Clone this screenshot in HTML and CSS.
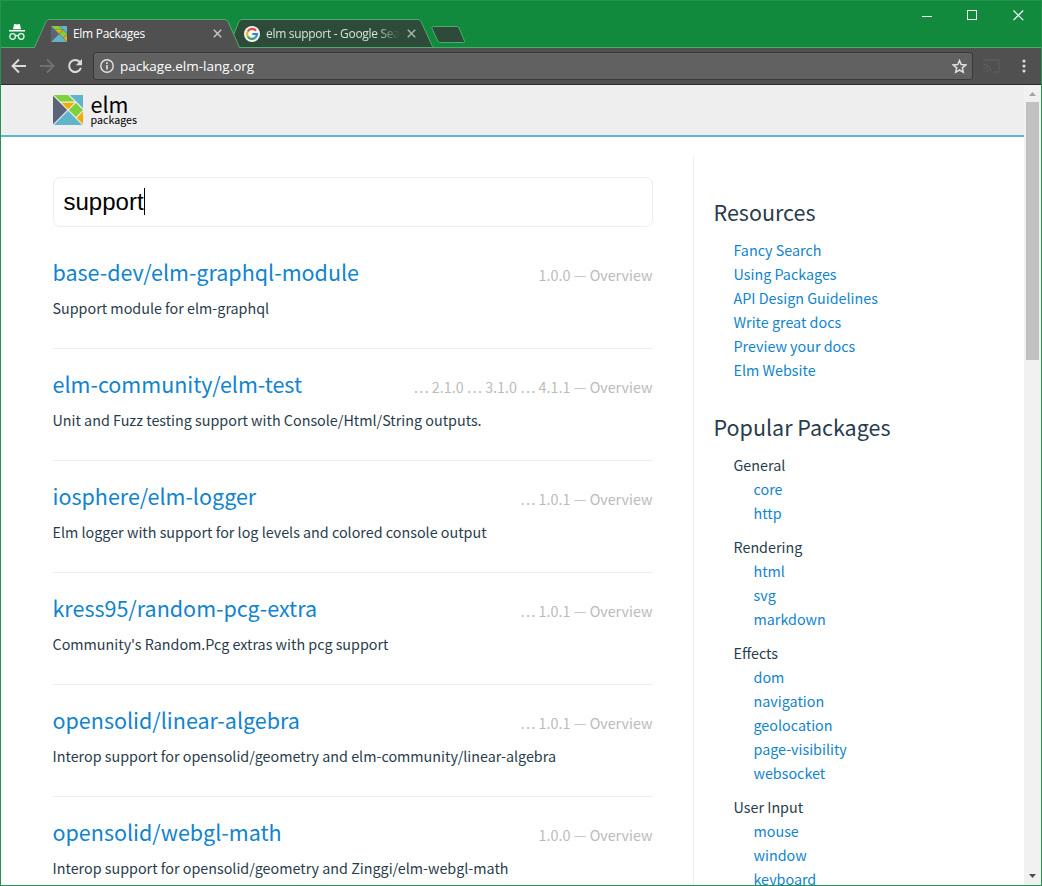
FILE: index.html
```
<!DOCTYPE html>
<html lang="en">
<head>
<meta charset="utf-8">
<title>Elm Packages</title>
<link rel="stylesheet" href="styles.css">
</head>
<body>
<svg width="0" height="0" class="defs">
  <symbol id="elm" viewBox="0 0 30 30">
    <rect class="elm-gap" width="30" height="30"/>
    <path d="M0 .8 14.200 15 0 29.200z" fill="#5a6378"/>
    <path d="M.8 30 15 15.800 29.200 30z" fill="#60b5cc"/>
    <path d="M16.700 0H30v13.300z" fill="#60b5cc"/>
    <path d="M.8 0H15l6.600 6.500H7.400z" fill="#7fd13b"/>
    <path d="M8.500 7.700H21.500L15 14.200z" fill="#f0ad00"/>
    <path d="M22.900 7.900 30 15 22.900 22.100 15.800 15z" fill="#7fd13b"/>
    <path d="M30 16.600V29.200L23.700 22.900z" fill="#f0ad00"/>
  </symbol>
</svg>
<div class="window">
  <div class="tabstrip">
    <svg class="tab-shapes" width="480" height="29" viewBox="0 19 480 29">
      <path d="M232.500 37.500 239 21.500q1-2 3-2H418q2 0 3 2L432 45.500l1.500 2H237z" fill="#2e4b39" stroke="#4faa6f"/>
      <path d="M434.500 26.500H457q1.300 0 2 1.500L464.500 41q.3 1.500-1 1.500H440q-1.500 0-2.200-1.500L432 28.500q-.5-2 1.200-2z" fill="#2e4b39" stroke="#4faa6f"/>
      <path d="M34.500 48 46 21.500q1-2 3-2H225q2 0 3 2L239.500 48z" fill="#505050"/>
      <path d="M0 47.500H34.500L46 21.500q1-2 3-2H225q2 0 3 2L239.500 47.500" fill="none" stroke="#4faa6f"/>
    </svg>
    <svg class="incognito" width="18" height="18" viewBox="0 0 18 18">
      <path d="M5 6.200 6 1.500q.2-.5.800-.4L9 1.600l2.200-.5q.6-.1.800.4L13 6.200z" fill="#fff"/>
      <path d="M1 7h16v1.500H1z" fill="#fff"/>
      <g fill="none" stroke="#e8f5ec" stroke-width="1.300"><circle cx="4.600" cy="13.500" r="2.800"/><circle cx="13.200" cy="13.500" r="2.800"/><path d="M7.400 13q1.500-1 3 0"/></g>
    </svg>
    <div class="tab tab-active">
      <svg class="favicon" width="16" height="16"><use href="#elm"/></svg>
      <span class="tab-title">Elm Packages</span>
      <svg width="9" height="9" class="x"><path d="M.8.8 8.200 8.200M8.200.8.800 8.200" stroke="#c4c4c4" stroke-width="1.500"/></svg>
    </div>
    <div class="tab tab-back">
      <svg width="16" height="16" viewBox="0 0 16 16"><circle cx="8" cy="8" r="8" fill="#f3f6f3"/><g fill="none" stroke-width="2.200"><path d="M12 4.800A5 5 0 0 0 3.700 5.500" stroke="#dc5040"/><path d="M3.700 5.500A5 5 0 0 0 3.700 10.500" stroke="#eab41e"/><path d="M3.700 10.500A5 5 0 0 0 11.300 11.700" stroke="#3fa35a"/><path d="M11.300 11.700A5 5 0 0 0 13 8H8.300" stroke="#3d80d8"/></g></svg>
      <span class="tab-title faded">elm support - Google Sea</span>
      <svg width="9" height="9" class="x"><path d="M.8.8 8.200 8.200M8.200.8.800 8.200" stroke="#a5b5aa" stroke-width="1.500"/></svg>
    </div>
    <div class="controls">
      <svg width="10" height="11"><path d="M0 6.500H10" stroke="#fff"/></svg>
      <svg width="11" height="11"><rect x=".5" y=".5" width="9" height="9" fill="none" stroke="#fff"/></svg>
      <svg width="11" height="11"><path d="M.5.500 10.200 10.200M10.200.500.500 10.200" stroke="#fff" stroke-width="1.200"/></svg>
    </div>
  </div>
  <div class="toolbar">
    <svg class="nav-icon" width="16" height="16" viewBox="0 0 16 16"><path d="M15 8H2M8 1.500 1.500 8 8 14.500" fill="none" stroke="#dcdcdc" stroke-width="1.900"/></svg>
    <svg class="nav-icon" width="16" height="16" viewBox="0 0 16 16"><path d="M1 8H14M8 1.500 14.500 8 8 14.500" fill="none" stroke="#707070" stroke-width="1.900"/></svg>
    <svg class="nav-icon" width="16" height="16" viewBox="0 0 16 16"><path d="M12.700 4A6 6 0 1 0 13.900 9.800" fill="none" stroke="#dcdcdc" stroke-width="2"/><path d="M15 1V7.200H8.800z" fill="#dcdcdc"/></svg>
    <div class="omnibox">
      <svg width="14" height="14" viewBox="0 0 14 14"><circle cx="7" cy="7" r="6.200" fill="none" stroke="#e4e4e4" stroke-width="1.400"/><path d="M7 6V10.500M7 3.300V5" stroke="#e4e4e4" stroke-width="1.600"/></svg>
      <span class="url">package.elm-lang.org</span>
      <svg width="15" height="15" viewBox="0 0 15 15"><path d="M7.500 1.500 9.200 5.600 13.700 6 10.300 8.900 11.300 13.300 7.500 11 3.700 13.300 4.700 8.900 1.300 6 5.800 5.600z" fill="none" stroke="#e0e0e0" stroke-width="1.500"/></svg>
    </div>
    <svg class="cast" width="17" height="14" viewBox="0 0 17 14"><path d="M1 3.500V1H16V13H10M.5 5.500A7.500 7.500 0 0 1 8 13M.5 8.500A4.500 4.500 0 0 1 5 13" fill="none" stroke="#5c5c5c" stroke-width="1.300"/><path d="M.5 11 2.500 13H.5z" fill="#5c5c5c"/></svg>
    <svg class="menu" width="4" height="14"><g fill="#dcdcdc"><circle cx="2" cy="2" r="1.600"/><circle cx="2" cy="7" r="1.600"/><circle cx="2" cy="12" r="1.600"/></g></svg>
  </div>
  <div class="viewport">
    <div class="page">
      <header class="header">
        <div class="brand">
          <svg width="30" height="30"><use href="#elm"/></svg>
          <div class="brand-text"><div class="brand-name">elm</div><div class="brand-sub">packages</div></div>
        </div>
      </header>
      <div class="columns">
        <main class="results">
          <div class="search">support<span class="caret"></span></div>
          <article class="pkg"><div class="pkg-head"><a class="pkg-name">base-dev/elm-graphql-module</a><span class="versions">1.0.0 — Overview</span></div><p class="summary">Support module for elm-graphql</p></article>
          <article class="pkg"><div class="pkg-head"><a class="pkg-name">elm-community/elm-test</a><span class="versions">… 2.1.0 … 3.1.0 … 4.1.1 — Overview</span></div><p class="summary">Unit and Fuzz testing support with Console/Html/String outputs.</p></article>
          <article class="pkg"><div class="pkg-head"><a class="pkg-name">iosphere/elm-logger</a><span class="versions">… 1.0.1 — Overview</span></div><p class="summary">Elm logger with support for log levels and colored console output</p></article>
          <article class="pkg"><div class="pkg-head"><a class="pkg-name">kress95/random-pcg-extra</a><span class="versions">… 1.0.1 — Overview</span></div><p class="summary">Community's Random.Pcg extras with pcg support</p></article>
          <article class="pkg"><div class="pkg-head"><a class="pkg-name">opensolid/linear-algebra</a><span class="versions">… 1.0.1 — Overview</span></div><p class="summary">Interop support for opensolid/geometry and elm-community/linear-algebra</p></article>
          <article class="pkg"><div class="pkg-head"><a class="pkg-name">opensolid/webgl-math</a><span class="versions">1.0.0 — Overview</span></div><p class="summary">Interop support for opensolid/geometry and Zinggi/elm-webgl-math</p></article>
        </main>
        <aside class="sidebar">
          <h2>Resources</h2>
          <ul class="links"><li>Fancy Search</li><li>Using Packages</li><li>API Design Guidelines</li><li>Write great docs</li><li>Preview your docs</li><li>Elm Website</li></ul>
          <h2>Popular Packages</h2>
          <div class="group">General<ul class="links"><li>core</li><li>http</li></ul></div>
          <div class="group">Rendering<ul class="links"><li>html</li><li>svg</li><li>markdown</li></ul></div>
          <div class="group">Effects<ul class="links"><li>dom</li><li>navigation</li><li>geolocation</li><li>page-visibility</li><li>websocket</li></ul></div>
          <div class="group">User Input<ul class="links"><li>mouse</li><li>window</li><li>keyboard</li></ul></div>
        </aside>
      </div>
    </div>
    <div class="scrollbar">
      <svg width="17" height="17"><path d="M5 11 8.500 7 12 11z" fill="#a3a3a3"/></svg>
      <div class="thumb"></div>
      <svg class="down" width="17" height="17"><path d="M5 6 8.500 10 12 6z" fill="#505050"/></svg>
    </div>
  </div>
</div>
</body>
</html>
```
FILE: styles.css
```
* { box-sizing: border-box; }
body { margin: 0; }
.defs { position: absolute; }
svg { display: block; flex: none; }
.elm-gap { fill: var(--gap, #eee); }
.favicon { --gap: #777; }
.window {
  width: 1042px; height: 886px; overflow: hidden;
  display: flex; flex-direction: column;
  border: 1px solid #259252; background: #118a3e;
}
.tabstrip {
  position: relative; height: 47px; flex: none;
  display: flex; padding-top: 18px; border-bottom: 1px solid #4faa6f;
}
.tab-shapes { position: absolute; left: -1px; bottom: -1px; }
.incognito { margin: 4px 0 0 7px; }
.tab {
  position: relative; display: flex; align-items: center; height: 29px;
  font: 12px/16px "Open Sans", sans-serif; color: #fff;
}
.tab-active { margin-left: 25px; width: 193px; }
.tab-back { color: #d3e3d7; width: 172px; }
.tab-title { margin-left: 6px; flex: 1; white-space: nowrap; overflow: hidden; letter-spacing: -0.3px; }
.faded { -webkit-mask-image: linear-gradient(90deg, #000 110px, transparent 134px); mask-image: linear-gradient(90deg, #000 110px, transparent 134px); }
.x { margin: 0 22px 0 7px; }
.tab-back .x { margin-right: 0; }
.controls { margin: -9px 17px 0 auto; display: flex; gap: 35px; }
.toolbar {
  height: 37px; flex: none; background: #505050; border-bottom: 1px solid #2b2b2b;
  display: flex; align-items: center; padding: 0 15.5px 0 10px;
}
.nav-icon { margin-right: 12px; }
.omnibox {
  width: 880px; height: 28px; margin-left: -2px; padding: 0 5px 0 6px;
  display: flex; align-items: center;
  background: #616161; border: 1px solid #393939; border-radius: 3px;
}
.url { flex: 1; margin-left: 6px; font: 13.5px/18px "Open Sans", sans-serif; color: #fff; letter-spacing: 0; }
.cast { margin-left: 10px; }
.menu { margin-left: auto; }
.viewport { flex: 1; min-height: 0; display: flex; overflow: hidden; }
.page {
  flex: 1; min-width: 0; background: #fff; color: #293c4b;
  font: 14.34px/24px "Noto Sans CJK SC", sans-serif;
}
.header { height: 52px; background: #eee; border-bottom: 2px solid #60b5cc; padding: 10px 52px; }
.brand { display: flex; color: #000; }
.brand-text { margin: -1px 0 0 7.5px; }
.brand-name { font-size: 21.500px; line-height: 20px; }
.brand-sub { font-size: 10.700px; line-height: 12px; }
.columns { display: flex; padding: 20px 0 0 51.5px; }
.results { width: 600px; padding-top: 20px; }
.search {
  height: 50px; display: flex; align-items: center; padding-left: 10px; margin-bottom: 10px;
  border: 1px solid #eee; border-radius: 7px;
  font: 24px/28px "Liberation Sans", Arial, sans-serif; color: #000;
}
.caret { width: 1px; height: 27px; margin-top: -2px; background: #000; }
.pkg { height: 112px; padding-top: 19px; border-bottom: 1px solid #eee; }
.pkg-head { display: flex; justify-content: space-between; align-items: baseline; height: 32px; }
.pkg-name { font-size: 21.500px; line-height: 32px; color: #1184ce; }
.versions { color: #bbb; }
.summary { margin: 8px 0 0; white-space: nowrap; }
.sidebar { margin-left: 40px; padding: 40px 0 0 20px; border-left: 1px solid #eee; }
h2 { margin: 0 0 11px; font-size: 21.500px; font-weight: 400; line-height: 30px; }
.links { list-style: none; margin: 0; padding: 0 0 0 20px; color: #1184ce; }
.links + h2 { margin-top: 30px; }
.group { margin: 0 0 10px 20px; }
.scrollbar { width: 17px; background: #f1f1f1; display: flex; flex-direction: column; }
.thumb { width: 13px; height: 258px; margin-left: 2px; background: #c1c1c1; }
.down { margin-top: auto; }
```
